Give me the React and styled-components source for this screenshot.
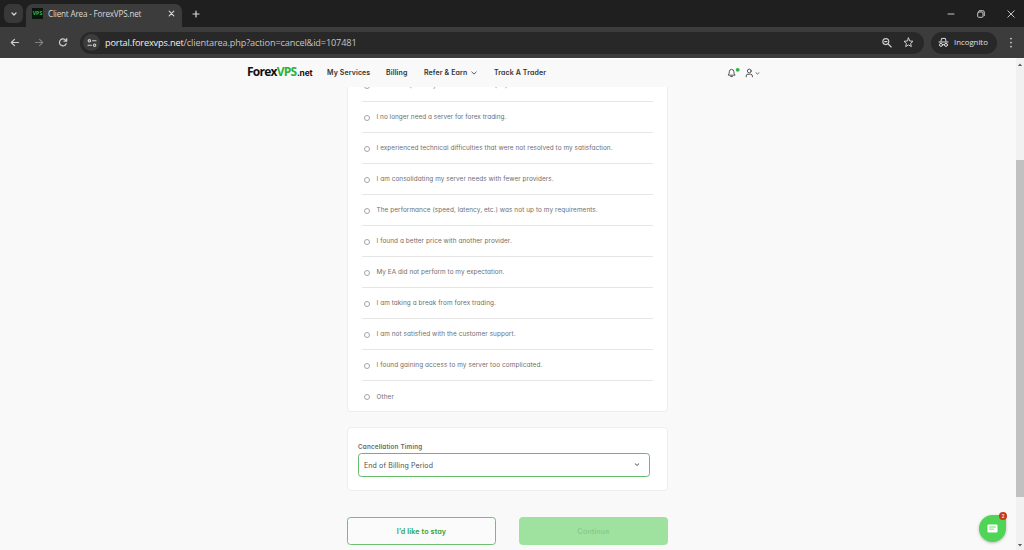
import React from "react";
import styled, { createGlobalStyle } from "styled-components";

const Global = createGlobalStyle`
  * { box-sizing: border-box; }
  html, body { margin: 0; padding: 0; overflow: hidden; background: #f9f9f9; }
  body { font-family: Inter, sans-serif; font-feature-settings: "cv11"; }
  button { font: inherit; font-feature-settings: inherit; margin: 0; padding: 0; }
`;

const Window = styled.div`
  width: 1024px;
  height: 550px;
  display: flex;
  flex-direction: column;
  overflow: hidden;
`;

/* browser frame */
const TabStrip = styled.div`
  height: 27px;
  flex: none;
  display: flex;
  align-items: flex-end;
  background: #1f1f1f;
  color: #d8d8d8;
  font-family: "Open Sans", sans-serif;
`;
const TabSearch = styled.div`
  width: 19px;
  height: 19px;
  margin: 0 3px 4px 4px;
  border-radius: 6px;
  background: #383838;
  display: grid;
  place-items: center;
`;
const Tab = styled.div`
  width: 156px;
  height: 23px;
  padding: 0 7px 4px 6px;
  border-radius: 7px 7px 0 0;
  background: #3c3c3c;
  display: flex;
  align-items: center;
`;
const Favicon = styled.div`
  width: 11px;
  height: 11px;
  background: #0b160d;
  color: #35b84a;
  font: 700 5.2px/11px "Open Sans", sans-serif;
  text-align: center;
`;
const TabTitle = styled.div`
  flex: 1;
  margin-left: 5px;
  font-size: 8.1px;
  line-height: 12px;
  letter-spacing: -0.17px;
  white-space: nowrap;
`;
const NewTab = styled.div`
  width: 11px;
  height: 27px;
  margin-left: 8px;
  display: grid;
  place-items: center;
`;
const WindowControls = styled.div`
  height: 27px;
  margin-left: auto;
  padding-right: 9px;
  display: flex;
  align-items: center;
  gap: 22px;
`;
const Toolbar = styled.div`
  height: 31px;
  flex: none;
  padding: 0 9px;
  display: flex;
  align-items: center;
  background: #3c3c3c;
  color: #d0d0d0;
  font-family: "Open Sans", sans-serif;
`;
const NavButtons = styled.div`
  width: 71px;
  display: flex;
  align-items: center;
  gap: 12px;
`;
const AddressBar = styled.div`
  width: 844px;
  height: 22px;
  padding: 0 10px 0 3px;
  border-radius: 11px;
  background: #282828;
  display: flex;
  align-items: center;
`;
const SiteInfo = styled.div`
  width: 17px;
  height: 17px;
  border-radius: 50%;
  background: #3c3c3c;
  display: grid;
  place-items: center;
`;
const Url = styled.div`
  flex: 1;
  margin-left: 5px;
  font-size: 9.2px;
  line-height: 14px;
  letter-spacing: -0.15px;
  color: #c4c4c4;
  white-space: nowrap;
  b { font-weight: 400; color: #f0f0f0; }
`;
const AddressActions = styled.div`
  display: flex;
  align-items: center;
  gap: 10px;
`;
const Incognito = styled.div`
  width: 66px;
  height: 22px;
  margin-left: 7px;
  padding: 0 0 1px 7px;
  border-radius: 11px;
  background: #282828;
  display: flex;
  align-items: center;
  gap: 5px;
  font-size: 7.8px;
  line-height: 12px;
  color: #e0e0e0;
`;
const MenuSlot = styled.div`
  margin-left: auto;
  width: 10px;
  height: 14px;
`;

/* page */
const Viewport = styled.div`
  flex: 1;
  min-height: 0;
  display: flex;
  background: #f9f9f9;
`;
const Page = styled.div`
  flex: 1;
  min-width: 0;
  display: flex;
  flex-direction: column;
`;
const Header = styled.header`
  height: 29px;
  flex: none;
  padding: 0 247px;
  border-top: 1px solid #fff;
  display: flex;
  align-items: center;
  background: #f9f9f9;
`;
const Logo = styled.div`
  width: 80px;
  padding-bottom: 2px;
  display: flex;
  align-items: baseline;
  font: 700 12px/14px "Open Sans", sans-serif;
  letter-spacing: -0.75px;
  color: #111;
  span { color: #2eb135; }
  small { font: 700 8.4px/10px Inter, sans-serif; letter-spacing: -0.15px; margin-left: 0.5px; }
`;
const Nav = styled.nav`
  flex: 1;
  display: flex;
  align-items: center;
`;
const NavItem = styled.a`
  width: ${(p) => p.$w}px;
  display: flex;
  align-items: center;
  gap: 4px;
  font-size: 7px;
  font-weight: 600;
  line-height: 10px;
  letter-spacing: 0.12px;
  color: #333;
  white-space: nowrap;
`;
const HeaderIcons = styled.div`
  width: 42px;
  display: flex;
  align-items: center;
  padding-bottom: 1px;
  color: #444;
`;
const UserMenu = styled.div`
  margin-left: 5px;
  display: flex;
  align-items: center;
  gap: 1px;
`;
const Main = styled.main`
  flex: 1;
  min-height: 0;
  width: 321px;
  margin-left: 347px;
  overflow: hidden;
`;
const Card = styled.section`
  background: #fff;
  border: 1px solid #eeeeee;
  border-radius: 4px;
`;
const ReasonCard = styled(Card)`
  display: flow-root;
  height: 325px;
  padding: 0 14px;
  border-top: 0;
  border-radius: 0 0 4px 4px;
`;
const Reason = styled.label`
  height: 31px;
  margin-top: ${(p) => (p.$first ? "-16px" : "0")};
  padding: 0 0 ${(p) => (p.$first ? "2px" : "0")} 1.5px;
  border-bottom: ${(p) => (p.$last ? "0" : "1px solid #e6e6e6")};
  display: flex;
  align-items: center;
`;
const Radio = styled.span`
  width: 6px;
  height: 6px;
  flex: none;
  margin: 1px 7px 0 0;
  border: 1px solid #a5a5a5;
  border-radius: 50%;
  background: #fff;
`;
const ReasonText = styled.span`
  font-size: 6.4px;
  line-height: 10px;
  letter-spacing: ${(p) => p.$track}px;
  color: #6f6f6f;
  white-space: nowrap;
`;
const TimingCard = styled(Card)`
  height: 64px;
  margin-top: 15px;
  padding: 15px 17.5px 0 10px;
`;
const FieldLabel = styled.div`
  font-size: 6.3px;
  font-weight: 600;
  line-height: 9px;
  letter-spacing: 0.17px;
  color: #6a6a6a;
`;
const Select = styled.div`
  height: 24px;
  margin-top: 1px;
  padding: 0 9px 0 5px;
  border: 1px solid #66bb6a;
  border-radius: 3.5px;
  display: flex;
  align-items: center;
  justify-content: space-between;
  font-size: 7px;
  letter-spacing: 0.12px;
  color: #505050;
  svg { margin-bottom: 1px; }
`;
const Actions = styled.div`
  margin-top: 26px;
  display: flex;
  justify-content: space-between;
`;
const Button = styled.button`
  width: 149px;
  height: 28px;
  border: 1px solid ${(p) => (p.$muted ? "#9fe2a0" : "#70bf74")};
  border-radius: 3.5px;
  background: ${(p) => (p.$muted ? "#9fe2a0" : "#fbfbfb")};
  color: ${(p) => (p.$muted ? "#8bc98e" : "#2fa336")};
  font-size: 7.2px;
  font-weight: 600;
  letter-spacing: 0.12px;
`;
const Scrollbar = styled.div`
  width: 8px;
  flex: none;
  display: flex;
  flex-direction: column;
  justify-content: space-between;
  align-items: center;
  padding: 4px 0 2px;
  background: #f1f1f1;
`;
const Thumb = styled.div`
  width: 8px;
  height: 337px;
  margin-bottom: -47px;
  background: #c1c1c1;
`;
const Chat = styled.div`
  position: absolute;
  left: 979px;
  top: 515px;
  width: 27px;
  height: 27px;
  border-radius: 50% 4px 50% 50%;
  background: #50d455;
  box-shadow: 0 1px 3px #0004;
  display: grid;
  place-items: center;
`;
const Badge = styled.span`
  position: absolute;
  right: -1px;
  top: -3px;
  width: 8px;
  height: 8px;
  border-radius: 50%;
  background: #c33c1b;
  color: #fff;
  font-size: 5px;
  line-height: 8px;
  text-align: center;
`;

const Svg = styled.svg`
  display: block;
  flex: none;
`;
const Icon = ({ w = 10, h = w, sw = 1, children }) => (
  <Svg width={w} height={h} viewBox={`0 0 ${w} ${h}`} fill="none" stroke="currentColor" strokeWidth={sw} strokeLinecap="round" strokeLinejoin="round">
    {children}
  </Svg>
);

const reasons = [
  ["I did not expect any restrictions on the prop accounts", 0.02],
  ["I no longer need a server for forex trading.", 0.035],
  ["I experienced technical difficulties that were not resolved to my satisfaction.", 0.07],
  ["I am consolidating my server needs with fewer providers.", 0.07],
  ["The performance (speed, latency, etc.) was not up to my requirements.", 0.085],
  ["I found a better price with another provider.", 0.085],
  ["My EA did not perform to my expectation.", 0.05],
  ["I am taking a break from forex trading.", 0.075],
  ["I am not satisfied with the customer support.", 0.085],
  ["I found gaining access to my server too complicated.", 0.1],
  ["Other", 0.1],
];

export default function App() {
  return (
    <Window>
      <Global />
      <TabStrip>
        <TabSearch><Icon w={6} sw={1.2}><path d="M1 2l2 2 2-2" /></Icon></TabSearch>
        <Tab>
          <Favicon>VPS</Favicon>
          <TabTitle>Client Area - ForexVPS.net</TabTitle>
          <Icon w={7} sw={1.1}><path d="M1.2 1.2l4.6 4.6M5.8 1.2L1.2 5.8" /></Icon>
        </Tab>
        <NewTab><Icon w={8} sw={1.2}><path d="M4 1v6M1 4h6" /></Icon></NewTab>
        <WindowControls>
          <Icon w={8} sw={0.9}><path d="M1 4h6" /></Icon>
          <Icon w={8} sw={0.9}><rect x=".7" y="2" width="5.3" height="5.3" rx="1" /><path d="M2.3.7h3.5Q7.3.7 7.3 2.2v3.5" /></Icon>
          <Icon w={8} sw={0.9}><path d="M.8.8l6.4 6.4M7.2.8L.8 7.2" /></Icon>
        </WindowControls>
      </TabStrip>
      <Toolbar>
        <NavButtons>
          <Icon w={12} sw={1.2}><path d="M9.5 5.5H2.5M5.5 2.3L2.3 5.5l3.2 3.2" /></Icon>
          <Icon w={12} sw={1.1}><g opacity=".45"><path d="M2.5 5.5h7M6.5 2.3L9.7 5.5 6.5 8.7" /></g></Icon>
          <Icon w={12} sw={1.2}><path d="M9.2 6.7A3.5 3.5 0 1 1 8.7 3.2L9.6 4.1M9.7 1.5v2.7H7" /></Icon>
        </NavButtons>
        <AddressBar>
          <SiteInfo><Icon w={10} sw={1.1}><circle cx="2.4" cy="2.8" r="1.2" /><path d="M5.5 2.8h3.5M1 7.2h3.5" /><circle cx="7.6" cy="7.2" r="1.2" /></Icon></SiteInfo>
          <Url><b>portal.forexvps.net</b>/clientarea.php?action=cancel&amp;id=107481</Url>
          <AddressActions>
            <Icon w={12} sw={1.1}><circle cx="4.8" cy="4.6" r="3" /><path d="M7.2 7l3 3M3.6 4.6H6" /></Icon>
            <Icon w={11} sw={1}><path d="M5.5 1l1.3 3 3.2.3-2.4 2.1.7 3.2-2.8-1.7-2.8 1.7.7-3.2L1 4.3 4.2 4z" /></Icon>
          </AddressActions>
        </AddressBar>
        <Incognito>
          <Icon w={11} sw={1}><path d="M3 4.2L3.6 1.4h3.8L8 4.2M1 5h9" /><circle cx="3" cy="7.9" r="1.5" /><circle cx="8" cy="7.9" r="1.5" /><path d="M4.5 7.6h2" /></Icon>
          Incognito
        </Incognito>
        <MenuSlot><Icon w={10} h={14}><g fill="currentColor" stroke="none"><circle cx="6" cy="2.6" r=".9" /><circle cx="6" cy="6.6" r=".9" /><circle cx="6" cy="10.6" r=".9" /></g></Icon></MenuSlot>
      </Toolbar>
      <Viewport>
        <Page>
          <Header>
            <Logo>Forex<span>VPS</span><small>.net</small></Logo>
            <Nav>
              <NavItem $w={59}>My Services</NavItem>
              <NavItem $w={38}>Billing</NavItem>
              <NavItem $w={70}>Refer &amp; Earn <Icon w={6} sw={0.8}><path d="M.8 2L3 4.1 5.2 2" /></Icon></NavItem>
              <NavItem $w={60}>Track A Trader</NavItem>
            </Nav>
            <HeaderIcons>
              <Icon w={13} h={11} sw={0.9}><path d="M1.5 7.9Q2.3 7.1 2.3 4.7a2.3 2.3 0 0 1 4.6 0Q6.9 7.1 7.8 7.9zM3.7 9.5h1.8" /><circle cx="10.7" cy="2.8" r="1.9" fill="#2fb344" stroke="none" /></Icon>
              <UserMenu>
                <Icon w={9} h={10} sw={0.9}><circle cx="4.3" cy="3" r="1.9" /><path d="M1.2 8.8V8Q1.2 6.2 3 6.2h2.6Q7.4 6.2 7.4 8v.8" /></Icon>
                <Icon w={5} sw={0.8}><path d="M1 2.8l1.5 1.2L4 2.8" /></Icon>
              </UserMenu>
            </HeaderIcons>
          </Header>
          <Main>
            <ReasonCard>
              {reasons.map(([text, track], i) => (
                <Reason key={text} $first={i === 0} $last={i === reasons.length - 1}>
                  <Radio />
                  <ReasonText $track={track}>{text}</ReasonText>
                </Reason>
              ))}
            </ReasonCard>
            <TimingCard>
              <FieldLabel>Cancellation Timing</FieldLabel>
              <Select>End of Billing Period<Icon w={6} sw={1}><path d="M1.2 1.8L3 3.5l1.8-1.7" /></Icon></Select>
            </TimingCard>
            <Actions>
              <Button>I’d like to stay</Button>
              <Button $muted>Continue</Button>
            </Actions>
          </Main>
        </Page>
        <Scrollbar>
          <Icon w={6} h={5}><path d="M1 4l2-2.5L5 4z" fill="#555" stroke="none" /></Icon>
          <Thumb />
          <Icon w={6} h={5}><path d="M1 1l2 2.5L5 1z" fill="#555" stroke="none" /></Icon>
        </Scrollbar>
      </Viewport>
      <Chat>
        <Icon w={11} h={9}><rect x=".5" y=".5" width="10" height="8" rx="1" fill="#fff" stroke="none" /><path d="M2.5 3h6M2.5 5.2h4" stroke="#50d455" strokeWidth=".8" /></Icon>
        <Badge>2</Badge>
      </Chat>
    </Window>
  );
}
